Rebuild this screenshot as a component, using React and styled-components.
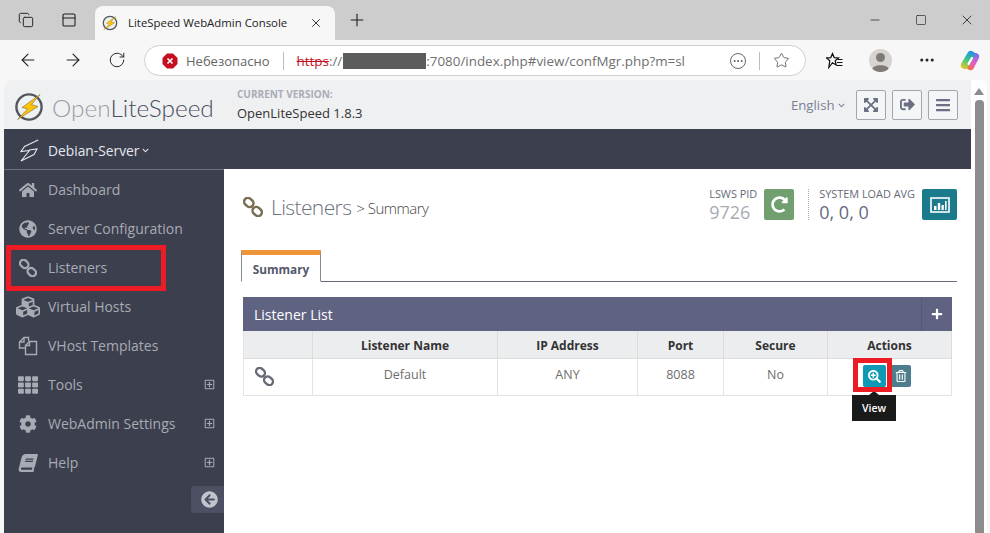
import React from "react";
import styled, { createGlobalStyle } from "styled-components";
import {
  FaHome,
  FaGlobeAmericas,
  FaCubes,
  FaTh,
  FaCog,
  FaBook,
  FaRegPlusSquare,
  FaArrowCircleLeft,
  FaExpandArrowsAlt,
  FaSignOutAlt,
  FaBars,
  FaRedoAlt,
  FaSearchPlus,
  FaRegTrashAlt,
  FaPlus,
  FaChevronDown,
} from "react-icons/fa";
import {
  ArrowLeft,
  ArrowRight,
  RotateCw,
  X,
  Plus,
  Minus,
  Square,
  Star,
  Ellipsis,
  PanelTop,
  Copy,
} from "lucide-react";

const GlobalStyle = createGlobalStyle`
  html, body { margin: 0; padding: 0; }
  body { font-family: "Open Sans", "Liberation Sans", sans-serif; overflow: hidden; }
`;

const LinkIcon = () => (
  <svg width="1em" height="1em" viewBox="0 0 20 20" fill="none" stroke="currentColor" strokeWidth="2.5">
    <rect x="0.8" y="1.7" width="10" height="7.6" rx="3.8" transform="rotate(42 5.8 5.5)" />
    <rect x="9.2" y="10.7" width="10" height="7.6" rx="3.8" transform="rotate(42 14.2 14.5)" />
  </svg>
);

const FilesIcon = () => (
  <svg width="1em" height="1em" viewBox="0 0 20 20" fill="none" stroke="currentColor" strokeWidth="1.4">
    <path d="M7 12 H1.5 V6 L6 1.5 H10.5 V5" />
    <path d="M6 1.5 V6 H1.5" />
    <path d="M7.5 9.5 L11.5 5.5 H18.5 V18.5 H7.5 Z" />
    <path d="M11.5 5.5 V9.5 H7.5" />
  </svg>
);

const menu = [
  { label: "Dashboard", icon: FaHome },
  { label: "Server Configuration", icon: FaGlobeAmericas },
  { label: "Listeners", icon: LinkIcon },
  { label: "Virtual Hosts", icon: FaCubes, size: 24 },
  { label: "VHost Templates", icon: FilesIcon, size: 20 },
  { label: "Tools", icon: FaTh, size: 20, more: true },
  { label: "WebAdmin Settings", icon: FaCog, more: true },
  { label: "Help", icon: FaBook, skew: true, more: true },
];

const Bolt = ({ size }) => (
  <svg width={size} height={size} viewBox="0 0 30 30">
    <circle cx="15" cy="15" r="12.6" fill="#eff0f2" stroke="#54575f" strokeWidth="2.4" />
    <path
      d="M26 2.5 L8 15.5 L13.5 17 L3.5 27.5 L24 14.5 L17.5 12.5 Z"
      fill="#fcc30b"
      stroke="#6a5a20"
      strokeWidth="0.5"
    />
  </svg>
);

const Copilot = () => (
  <svg width="23" height="23" viewBox="0 0 24 24" fill="none" strokeLinecap="round">
    <defs>
      <linearGradient id="cpA" gradientUnits="userSpaceOnUse" x1="14" y1="2" x2="5" y2="21">
        <stop offset="0" stopColor="#1f8fe8" />
        <stop offset="0.45" stopColor="#35c48c" />
        <stop offset="1" stopColor="#f7c81e" />
      </linearGradient>
      <linearGradient id="cpB" gradientUnits="userSpaceOnUse" x1="20" y1="5" x2="11" y2="22">
        <stop offset="0" stopColor="#7b6cf0" />
        <stop offset="0.55" stopColor="#e35fc0" />
        <stop offset="1" stopColor="#f6703a" />
      </linearGradient>
    </defs>
    <path d="M18 8 L13 18" stroke="url(#cpB)" strokeWidth="8" />
    <path d="M13.5 6 L7 17" stroke="url(#cpA)" strokeWidth="8" />
    <path d="M14.5 9.5 L11 15.5" stroke="#fff" strokeWidth="2.4" />
  </svg>
);

const ServerBolt = () => (
  <svg width="19" height="23" viewBox="0 0 19 23" fill="none" stroke="#e4e7ee" strokeWidth="1.1">
    <path d="M18.2 1 L4.5 7.5 L1 12.5 L9.5 11.5 L1 22 L14 15.5 L17 10 L9 11" />
  </svg>
);

const Favorites = () => (
  <svg width="17" height="17" viewBox="0 0 17 17" fill="none" stroke="#111" strokeWidth="1.2">
    <path d="M6.5 1.5 L8.2 5.6 L12.5 5.9 L9.2 8.7 L10.2 13 L6.5 10.7 L2.8 15.5 L3.8 8.7 L.6 5.9 L4.8 5.6 Z" />
    <path d="M11.5 7.5 H16.5 M11 10.5 H16.5 M11 13.5 H16.5" />
  </svg>
);

const Profile = () => (
  <svg width="23" height="23" viewBox="0 0 23 23">
    <circle cx="11.5" cy="11.5" r="11.5" fill="#d6d3d0" />
    <circle cx="11.5" cy="8.5" r="4.5" fill="#7d7a78" />
    <path d="M3.5 20 C4 15 19 15 19.5 20 C15 24 8 24 3.5 20 Z" fill="#7d7a78" />
  </svg>
);

const InsecureIcon = () => (
  <svg width="16" height="16" viewBox="0 0 16 16">
    <path d="M5 .5 H11 L15.5 5 V11 L11 15.5 H5 L.5 11 V5 Z" fill="#c50f1f" />
    <path d="M5.5 5.5 L10.5 10.5 M10.5 5.5 L5.5 10.5" stroke="#fff" strokeWidth="1.6" />
  </svg>
);

const LoadIcon = () => (
  <svg width="20" height="16" viewBox="0 0 20 16" fill="none">
    <rect x="1" y="1" width="18" height="14" stroke="#fff" strokeWidth="1.6" />
    <path d="M4 9 H6.5 V13 H4 Z M7.8 6 H10.2 V13 H7.8 Z M11.5 8 H13.8 V13 H11.5 Z M15 4 H16.6 V13 H15 Z" fill="#fff" />
  </svg>
);

export default function App() {
  return (
    <Root>
      <GlobalStyle />
      <TabStrip>
        <StripIcon>
          <Copy size={16} strokeWidth={1.4} />
        </StripIcon>
        <StripIcon>
          <PanelTop size={16} strokeWidth={1.6} />
        </StripIcon>
        <Tab>
          <Bolt size={16} />
          <TabTitle>LiteSpeed WebAdmin Console</TabTitle>
          <X size={14} strokeWidth={1.5} />
        </Tab>
        <NewTab>
          <Plus size={20} strokeWidth={1.3} />
        </NewTab>
        <WindowControls>
          <Minus size={14} strokeWidth={1.2} />
          <Square size={12} strokeWidth={1.3} />
          <X size={16} strokeWidth={1.2} />
        </WindowControls>
      </TabStrip>

      <Toolbar>
        <NavIcons>
          <ArrowLeft size={20} strokeWidth={1.3} />
          <ArrowRight size={20} strokeWidth={1.3} />
          <RotateCw size={18} strokeWidth={1.3} />
        </NavIcons>
        <AddressBar>
          <InsecureIcon />
          <Insecure>Небезопасно</Insecure>
          <AddressSep />
          <Url>
            <Scheme>https</Scheme>://<Redacted />:7080/index.php#view/confMgr.php?m=sl
          </Url>
          <AddressEnd>
            <DotsCircle>
              <Ellipsis size={12} strokeWidth={2} />
            </DotsCircle>
            <AddressSep />
            <Star size={17} strokeWidth={1.2} />
          </AddressEnd>
        </AddressBar>
        <ToolIcons>
          <Favorites />
          <Profile />
          <Ellipsis size={18} strokeWidth={2} />
          <CopilotSlot>
            <Copilot />
          </CopilotSlot>
        </ToolIcons>
      </Toolbar>

      <Page>
        <Main>
          <Header>
            <Logo>
              <LogoMark>
                <Bolt size={30} />
              </LogoMark>
              <LogoText>
                <LogoLight>Open</LogoLight>LiteSpeed
              </LogoText>
            </Logo>
            <Version>
              <VersionLabel>CURRENT VERSION:</VersionLabel>
              <VersionValue>OpenLiteSpeed 1.8.3</VersionValue>
            </Version>
            <HeaderRight>
              <Lang>
                English <FaChevronDown size={7} />
              </Lang>
              <HeaderButton>
                <FaExpandArrowsAlt size={16} />
              </HeaderButton>
              <HeaderButton>
                <FaSignOutAlt size={15} />
              </HeaderButton>
              <HeaderButton>
                <FaBars size={16} />
              </HeaderButton>
            </HeaderRight>
          </Header>

          <ServerBar>
            <ServerBolt />
            <ServerName>Debian-Server</ServerName>
            <FaChevronDown size={7} color="#e4e7ee" />
          </ServerBar>

          <Body>
            <Sidebar>
              {menu.map((m) => (
                <MenuItem key={m.label}>
                  <MenuIcon $size={m.size} $skew={m.skew}>
                    <m.icon />
                  </MenuIcon>
                  <MenuLabel>{m.label}</MenuLabel>
                  {m.more && (
                    <MenuMore>
                      <FaRegPlusSquare size={11} />
                    </MenuMore>
                  )}
                </MenuItem>
              ))}
              <Collapse>
                <FaArrowCircleLeft size={17} />
              </Collapse>
            </Sidebar>

            <Content>
              <TitleRow>
                <Title>
                  <TitleIcon>
                    <LinkIcon />
                  </TitleIcon>
                  <TitleMain>Listeners</TitleMain>
                  <TitleSub>&gt; Summary</TitleSub>
                </Title>
                <Stats>
                  <Stat>
                    <StatLabel>LSWS PID</StatLabel>
                    <StatValue $muted>9726</StatValue>
                  </Stat>
                  <StatButton $bg="#719f70" $w={30}>
                    <FaRedoAlt size={17} />
                  </StatButton>
                  <StatDivider />
                  <Stat>
                    <StatLabel>SYSTEM LOAD AVG</StatLabel>
                    <StatValue>0, 0, 0</StatValue>
                  </Stat>
                  <StatButton $bg="#1b7a8c" $w={35}>
                    <LoadIcon />
                  </StatButton>
                </Stats>
              </TitleRow>

              <Tabs>
                <ActiveTab>Summary</ActiveTab>
              </Tabs>

              <Panel>
                <PanelHead>
                  <PanelTitle>Listener List</PanelTitle>
                  <PanelAdd>
                    <FaPlus size={12} />
                  </PanelAdd>
                </PanelHead>
                <Table>
                  <HeadCell />
                  <HeadCell>Listener Name</HeadCell>
                  <HeadCell>IP Address</HeadCell>
                  <HeadCell>Port</HeadCell>
                  <HeadCell>Secure</HeadCell>
                  <HeadCell>Actions</HeadCell>
                  <Cell>
                    <RowIcon>
                      <LinkIcon />
                    </RowIcon>
                  </Cell>
                  <Cell>Default</Cell>
                  <Cell>ANY</Cell>
                  <Cell>8088</Cell>
                  <Cell>No</Cell>
                  <ActionCell>
                    <ActionButton $bg="#0e9ab5" $w={23}>
                      <FaSearchPlus size={13} />
                    </ActionButton>
                    <ActionButton $bg="#4f7d8e" $w={21}>
                      <FaRegTrashAlt size={12} />
                    </ActionButton>
                    <Tooltip>View</Tooltip>
                  </ActionCell>
                </Table>
              </Panel>
            </Content>
          </Body>
        </Main>

        <Scrollbar>
          <ScrollUp />
          <ScrollThumb />
        </Scrollbar>
      </Page>

      <Highlight $l={6} $t={245} $w={160} $h={46} />
      <Highlight $l={853} $t={358} $w={39} $h={34} />
    </Root>
  );
}

const Root = styled.div`
  position: relative;
  width: 990px;
  height: 533px;
  overflow: hidden;
  background: #f7f7f7;
  display: flex;
  flex-direction: column;
`;

const TabStrip = styled.div`
  height: 40px;
  flex: none;
  background: #cdcdcd;
  display: flex;
  align-items: flex-end;
  color: #1d1d1d;
  padding-left: 8px;
`;

const StripIcon = styled.div`
  width: 36px;
  height: 40px;
  margin-right: 7px;
  display: flex;
  align-items: center;
  justify-content: center;
`;

const Tab = styled.div`
  width: 240px;
  height: 34px;
  box-sizing: border-box;
  margin-left: 1px;
  background: #f7f7f7;
  border-radius: 8px 8px 0 0;
  display: flex;
  align-items: center;
  padding: 0 12px 0 7px;
  svg:first-child {
    flex: none;
  }
`;

const TabTitle = styled.span`
  font: 11.4px "Open Sans", sans-serif;
  color: #222;
  margin: 0 0 2px 10px;
  flex: 1;
  white-space: nowrap;
`;

const NewTab = styled.div`
  width: 42px;
  height: 40px;
  margin-left: 1px;
  display: flex;
  align-items: center;
  justify-content: center;
`;

const WindowControls = styled.div`
  margin-left: auto;
  width: 137px;
  height: 40px;
  padding: 0 15px;
  box-sizing: border-box;
  display: flex;
  align-items: center;
  justify-content: space-between;
`;

const Toolbar = styled.div`
  height: 40px;
  flex: none;
  display: flex;
  align-items: center;
  background: #f7f7f7;
`;

const NavIcons = styled.div`
  width: 144px;
  flex: none;
  padding: 0 18px;
  box-sizing: border-box;
  display: flex;
  justify-content: space-between;
  align-items: center;
  color: #222;
`;

const AddressBar = styled.div`
  width: 662px;
  height: 31px;
  flex: none;
  box-sizing: border-box;
  margin-top: 1px;
  background: #fff;
  border: 1px solid #cfcfcf;
  border-radius: 16px;
  display: flex;
  align-items: center;
  padding: 0 15px 0 17px;
  font-size: 13px;
  color: #6f6f6f;
`;

const Insecure = styled.span`
  margin-left: 8px;
  font-size: 13px;
  color: #666;
`;

const AddressSep = styled.span`
  width: 1px;
  height: 18px;
  background: #bbb;
  margin: 0 13px;
  flex: none;
`;

const Url = styled.span`
  display: flex;
  align-items: center;
  white-space: pre;
  font-size: 13.4px;
  color: #6f6f6f;
`;

const Scheme = styled.span`
  color: #c50f1f;
  text-decoration: line-through;
`;

const Redacted = styled.span`
  display: inline-block;
  width: 83px;
  height: 16px;
  background: #5c5c5c;
  margin-left: 1px;
`;

const AddressEnd = styled.div`
  margin-left: auto;
  display: flex;
  align-items: center;
  color: #555;
`;

const DotsCircle = styled.span`
  width: 14px;
  height: 14px;
  border: 1px solid #666;
  border-radius: 50%;
  display: flex;
  align-items: center;
  justify-content: center;
`;

const ToolIcons = styled.div`
  flex: 1;
  display: flex;
  align-items: center;
  gap: 26px;
  padding-left: 20px;
  color: #222;
`;

const CopilotSlot = styled.span`
  display: flex;
  margin-left: -4px;
`;

const Page = styled.div`
  flex: 1;
  min-height: 0;
  margin: 0 3px 0 4px;
  display: flex;
  background: #fff;
  border-radius: 8px 8px 0 0;
  overflow: hidden;
`;

const Main = styled.div`
  width: 967px;
  flex: none;
  display: flex;
  flex-direction: column;
`;

const Scrollbar = styled.div`
  flex: 1;
  display: flex;
  flex-direction: column;
  align-items: center;
  padding-top: 8px;
  background: #fff;
`;

const ScrollUp = styled.div`
  width: 0;
  height: 0;
  border-left: 5px solid transparent;
  border-right: 5px solid transparent;
  border-bottom: 7px solid #8c8c8c;
`;

const ScrollThumb = styled.div`
  width: 9px;
  flex: 1;
  margin-top: 5px;
  background: #8c8c8c;
  border-radius: 4px 4px 0 0;
`;

const Header = styled.div`
  height: 49px;
  flex: none;
  background: #eff0f2;
  display: flex;
  align-items: center;
  padding: 0 13px 0 10px;
`;

const Logo = styled.div`
  width: 223px;
  display: flex;
  align-items: center;
  gap: 8px;
  margin-top: 6px;
`;

const LogoMark = styled.span`
  display: flex;
  margin-top: -1px;
`;

const LogoText = styled.span`
  font: 300 24.4px Lato, "Open Sans", sans-serif;
  color: #4a4d5c;
`;

const LogoLight = styled.span`
  color: #9a9da6;
`;

const Version = styled.div`
  display: flex;
  flex-direction: column;
  gap: 3px;
  margin-top: -1px;
`;

const VersionLabel = styled.span`
  font-size: 10px;
  font-weight: 700;
  color: #a9acb6;
`;

const VersionValue = styled.span`
  font-size: 13px;
  color: #333;
`;

const HeaderRight = styled.div`
  margin-left: auto;
  display: flex;
  align-items: center;
  gap: 6px;
`;

const Lang = styled.span`
  font-size: 13.2px;
  color: #7c8094;
  margin-right: 5px;
  svg {
    vertical-align: 1px;
  }
`;

const HeaderButton = styled.div`
  width: 30px;
  height: 30px;
  box-sizing: border-box;
  border: 1px solid #a3a6ae;
  border-radius: 2px;
  background: #f4f5f6;
  color: #6a6f84;
  display: flex;
  align-items: center;
  justify-content: center;
`;

const ServerBar = styled.div`
  height: 40px;
  flex: none;
  box-sizing: border-box;
  padding: 2px 0 0 16px;
  background: #3c3f4e;
  display: flex;
  align-items: center;
`;

const ServerName = styled.span`
  font-size: 13.8px;
  color: #e4e7ee;
  margin: 0 3px 0 9px;
`;

const Body = styled.div`
  flex: 1;
  min-height: 0;
  display: flex;
`;

const Sidebar = styled.div`
  width: 220px;
  flex: none;
  background: #3c3f4e;
  border-top: 1px solid #6d7080;
  box-sizing: border-box;
  display: flex;
  flex-direction: column;
`;

const MenuItem = styled.div`
  height: 39px;
  flex: none;
  display: flex;
  align-items: center;
  color: #a8abb4;
`;

const MenuIcon = styled.span`
  width: 44px;
  flex: none;
  display: flex;
  justify-content: center;
  font-size: ${(p) => p.$size || 18}px;
  padding-left: 3px;
  box-sizing: border-box;
  svg {
    transform: ${(p) => (p.$skew ? "skewX(-14deg)" : "none")};
  }
`;

const MenuLabel = styled.span`
  font-size: 14px;
  color: #a8abb4;
`;

const MenuMore = styled.span`
  margin-left: auto;
  margin-right: 9px;
  display: flex;
`;

const Collapse = styled.div`
  width: 33px;
  height: 27px;
  box-sizing: border-box;
  padding-left: 3px;
  margin: 4px 0 0 auto;
  background: #4c5062;
  border-radius: 3px 0 0 3px;
  color: #c1c4cc;
  display: flex;
  align-items: center;
  justify-content: center;
`;

const Content = styled.div`
  flex: 1;
  min-width: 0;
  padding: 0 14px 0 17px;
  background: #fff;
`;

const TitleRow = styled.div`
  height: 81px;
  display: flex;
  align-items: flex-start;
  justify-content: space-between;
  padding-top: 20px;
  box-sizing: border-box;
`;

const Title = styled.div`
  display: flex;
  align-items: center;
  padding: 4px 0 0 2px;
`;

const TitleIcon = styled.span`
  font-size: 20px;
  color: #7a6f55;
  display: flex;
`;

const TitleMain = styled.span`
  font-size: 21px;
  font-weight: 300;
  letter-spacing: -0.6px;
  color: #6c7080;
  margin-left: 8px;
`;

const TitleSub = styled.span`
  font-size: 15px;
  font-weight: 300;
  color: #444;
  margin-left: 5px;
  letter-spacing: -0.5px;
  padding-top: 2px;
`;

const Stats = styled.div`
  display: flex;
  align-items: flex-start;
`;

const Stat = styled.div`
  display: flex;
  flex-direction: column;
  margin-top: -1px;
`;

const StatLabel = styled.span`
  font-size: 10.9px;
  line-height: 12px;
  color: #666a78;
`;

const StatValue = styled.span`
  font-size: 18px;
  line-height: 24px;
  color: ${(p) => (p.$muted ? "#a9abb3" : "#666a80")};
`;

const StatButton = styled.div`
  width: ${(p) => p.$w}px;
  height: 31px;
  margin-left: 7px;
  border-radius: 2px;
  background: ${(p) => p.$bg};
  color: #fff;
  display: flex;
  align-items: center;
  justify-content: center;
`;

const StatDivider = styled.span`
  height: 31px;
  border-left: 1px dotted #aaa;
  margin: 0 10px 0 14px;
`;

const Tabs = styled.div`
  height: 32px;
  box-sizing: border-box;
  border-bottom: 1px solid #6b6b7b;
  display: flex;
`;

const ActiveTab = styled.div`
  width: 80px;
  height: 32px;
  box-sizing: border-box;
  padding-top: 2px;
  border: 1px solid #8a8a96;
  border-top: 5px solid #ed9538;
  border-bottom: 1px solid #fff;
  background: #fff;
  font-size: 11.8px;
  font-weight: 700;
  color: #55586c;
  display: flex;
  align-items: center;
  justify-content: center;
`;

const Panel = styled.div`
  margin: 15px 5px 0 2px;
`;

const PanelHead = styled.div`
  height: 34px;
  background: #5f6280;
  color: #fff;
  display: flex;
  align-items: center;
`;

const PanelTitle = styled.span`
  flex: 1;
  font-size: 14px;
  padding-left: 11px;
`;

const PanelAdd = styled.span`
  width: 30px;
  height: 100%;
  border-left: 1px solid #565973;
  display: flex;
  align-items: center;
  justify-content: center;
`;

const Table = styled.div`
  display: grid;
  grid-template-columns: 69px 185px 140px 86px 104px 124px;
  grid-template-rows: 28px 37px;
  border-left: 1px solid #e2e2e2;
`;

const HeadCell = styled.div`
  background: #ecedef;
  border-right: 1px solid #dcdcdc;
  border-bottom: 1px solid #dcdcdc;
  box-sizing: border-box;
  padding-top: 1px;
  font-size: 12px;
  font-weight: 700;
  color: #333;
  display: flex;
  align-items: center;
  justify-content: center;
`;

const Cell = styled.div`
  border-right: 1px solid #e2e2e2;
  border-bottom: 1px solid #e2e2e2;
  box-sizing: border-box;
  font-size: 12.5px;
  color: #6e6e6e;
  display: flex;
  justify-content: center;
  padding-top: 7px;
`;

const RowIcon = styled.span`
  font-size: 19px;
  color: #666a74;
  display: flex;
  margin-right: 28px;
  margin-top: 1px;
`;

const ActionCell = styled(Cell)`
  position: relative;
  justify-content: flex-start;
  padding: 6px 0 0 35px;
  gap: 4px;
`;

const ActionButton = styled.div`
  width: ${(p) => p.$w}px;
  height: 22px;
  border-radius: 2px;
  background: ${(p) => p.$bg};
  color: #fff;
  display: flex;
  align-items: center;
  justify-content: center;
`;

const Tooltip = styled.div`
  position: absolute;
  left: 24px;
  top: 36px;
  width: 44px;
  height: 26px;
  background: #1a1a1a;
  color: #fff;
  font-size: 10.5px;
  font-weight: 600;
  display: flex;
  align-items: center;
  justify-content: center;
  &::before {
    content: "";
    position: absolute;
    top: -4px;
    left: 17px;
    border-left: 5px solid transparent;
    border-right: 5px solid transparent;
    border-bottom: 4px solid #1a1a1a;
  }
`;

const Highlight = styled.div`
  position: absolute;
  left: ${(p) => p.$l}px;
  top: ${(p) => p.$t}px;
  width: ${(p) => p.$w}px;
  height: ${(p) => p.$h}px;
  box-sizing: border-box;
  border: 5px solid #ed1c24;
  pointer-events: none;
`;
